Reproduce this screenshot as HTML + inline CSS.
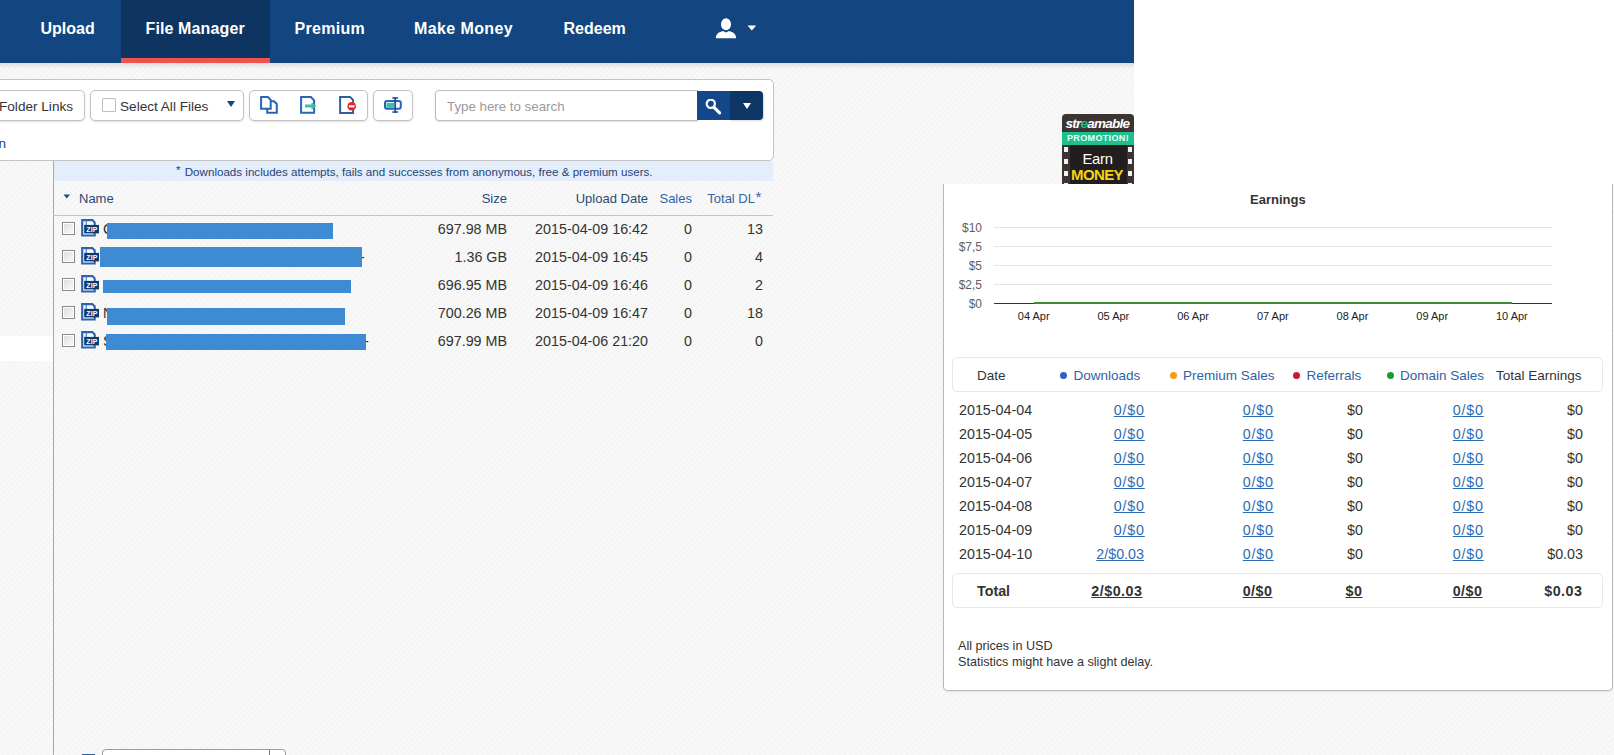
<!DOCTYPE html>
<html><head><meta charset="utf-8">
<style>
*{margin:0;padding:0;box-sizing:border-box}
html,body{width:1614px;height:755px;overflow:hidden}
body{position:relative;font-family:"Liberation Sans",sans-serif;color:#333;
background-color:#f5f5f5;
background-image:repeating-linear-gradient(135deg,rgba(255,255,255,0.45) 0px,rgba(255,255,255,0.45) 1.2px,rgba(255,255,255,0) 2px,rgba(255,255,255,0) 4px);
}
.a{position:absolute}
.t{position:absolute;white-space:nowrap;line-height:1}
#white-tr{left:1134px;top:0;width:480px;height:184px;background:#fff}
#nav{left:0;top:0;width:1134px;height:63px;background:#134680}
#navshadow{left:0;top:63px;width:1134px;height:6px;background:linear-gradient(rgba(0,0,0,0.10),rgba(0,0,0,0))}
#active{left:121px;top:0;width:149px;height:63px;background:#0e3562}
#redbar{left:121px;top:58px;width:149px;height:5px;background:#ef5350}
.nv{color:#fff;font-weight:bold;font-size:16px}

#card{left:-10px;top:79px;width:784px;height:82px;background:#fff;border:1px solid #c4c4c4;border-radius:0 5px 5px 0}
.btn{position:absolute;top:90px;height:31px;background:#fff;border:1px solid #c2c2c2;border-radius:5px;box-shadow:0 1px 2px rgba(0,0,0,0.12)}
.bt{font-size:13px;color:#333}
#search{left:435px;top:90px;width:263px;height:31px;background:#fff;border:1px solid #bdbdbd;border-radius:4px 0 0 4px;box-shadow:0 1px 2px rgba(0,0,0,0.12)}
#sbtn{left:697px;top:91px;width:33px;height:29px;background:#12488a}
#sdd{left:730px;top:91px;width:33px;height:29px;background:#0d3565;border-radius:0 4px 4px 0;box-shadow:1px 1px 2px rgba(0,0,0,0.15)}
#info{left:53px;top:161px;width:720px;height:20px;background:#e4eefa}
#tline{left:53px;top:161px;width:1px;height:594px;background:#a9a9a9}
#hline{left:53px;top:215px;width:720px;height:1px;background:#c4c4c4}
#lsel{left:0;top:336px;width:53px;height:25px;background:#fff}
.hd{font-size:13px;color:#2c5b90}
.cell{font-size:14.3px;color:#333}

.cb{position:absolute;width:13px;height:13px;border:1px solid #8a8a8a;background:linear-gradient(135deg,#dcdcdc,#fbfbfb);box-shadow:inset 0 0 0 1px #fff}
.bar{position:absolute;background:#3e8bd3}

#panel{left:943px;top:184px;width:670px;height:507px;background:#fff;border-left:1px solid #b9b9b9;border-right:1px solid #b9b9b9;border-bottom:1px solid #b9b9b9;border-radius:0 0 5px 5px;box-shadow:0 1px 2px rgba(0,0,0,0.08)}
.gl{position:absolute;left:994px;width:558px;height:1px;background:#e3e3e3}
.yl{position:absolute;right:632px;margin-top:0.5px;font-size:12px;color:#606060;line-height:1;white-space:nowrap}
.xl{position:absolute;font-size:11px;color:#222;line-height:1;white-space:nowrap;width:60px;text-align:center}
.hbox{position:absolute;left:952px;width:651px;background:#fff;border:1px solid #e2e8f0;border-radius:5px}
.ph{position:absolute;font-size:13.5px;line-height:1;white-space:nowrap;color:#333}
.pl{color:#2d63a8}
.dot{position:absolute;width:7px;height:7px;border-radius:50%}
.pr{position:absolute;font-size:14.3px;line-height:1;white-space:nowrap;color:#333}
.lk{letter-spacing:0.8px;margin-right:-0.8px;color:#2d6bb5;text-decoration:underline;text-underline-offset:0.5px;text-decoration-skip-ink:none}
.tb{letter-spacing:0.5px;margin-right:-0.5px;font-weight:bold;text-decoration:underline;text-underline-offset:1px;text-decoration-skip-ink:none;color:#333}
</style></head><body>
<div class="a" id="white-tr"></div>
<div class="a" id="nav"></div>
<div class="a" id="navshadow"></div>
<div class="a" id="active"></div>
<div class="a" id="redbar"></div>
<div class="t nv" style="left:40.5px;top:21px">Upload</div>
<div class="t nv" style="left:145.5px;top:21px;letter-spacing:0.12px">File Manager</div>
<div class="t nv" style="left:294.5px;top:21px;letter-spacing:0.3px">Premium</div>
<div class="t nv" style="left:414px;top:21px;letter-spacing:0.4px">Make Money</div>
<div class="t nv" style="left:563.5px;top:21px">Redeem</div>


<div class="a" id="card"></div>
<div class="btn" style="left:-10px;width:95px"></div>
<div class="t bt" style="left:-1px;top:99.5px;font-size:13.6px">Folder Links</div>
<div class="btn" style="left:90px;width:154px"></div>
<div class="a" style="left:102px;top:98px;width:14px;height:14px;border:1px solid #bdbdbd;background:#fff;border-radius:1px"></div>
<div class="t bt" style="left:120px;top:99.5px;font-size:13.6px">Select All Files</div>
<div class="a" style="left:227px;top:101px;width:0;height:0;border-left:4.5px solid transparent;border-right:4.5px solid transparent;border-top:6px solid #134680"></div>
<div class="btn" style="left:249px;width:119px"></div>
<div class="btn" style="left:373px;width:40px"></div>
<div class="t bt" style="left:-9px;top:137px;color:#24466f;font-size:13.6px">on</div>
<div class="a" id="search"></div>
<div class="t" style="left:447px;top:99.5px;font-size:13.3px;color:#9a9a9a">Type here to search</div>
<div class="a" id="sbtn"></div>
<div class="a" id="sdd"></div>
<div class="a" style="left:743px;top:103px;width:0;height:0;border-left:4.5px solid transparent;border-right:4.5px solid transparent;border-top:6px solid #fff"></div>
<svg class="a" style="left:704px;top:99px" width="19" height="17" viewBox="0 0 19 17"><circle cx="6.8" cy="4.8" r="4.1" fill="none" stroke="#fff" stroke-width="2.2"/><path d="M10 8.3 L15.6 13.8" stroke="#fff" stroke-width="3.2" stroke-linecap="round"/></svg>
<div class="a" id="info"></div>
<div class="t" style="left:176px;top:165.5px;font-size:11.6px;color:#1e4577"><span style="position:relative;top:-2px;margin-right:1px">*</span> Downloads includes attempts, fails and successes from anonymous, free &amp; premium users.</div>
<div class="a" id="tline"></div>
<div class="a" id="hline"></div>
<div class="a" id="lsel"></div>

<svg class="a" style="left:63px;top:194px" width="8" height="5" viewBox="0 0 8 5"><path d="M0.5 0.5 H7 L3.75 4.5 Z" fill="#1f4a7a"/></svg>
<div class="t hd" style="left:79px;top:192px;color:#2a4a78">Name</div>
<div class="t hd" style="right:1107px;top:192px;color:#2a4a78">Size</div>
<div class="t hd" style="right:966px;top:192px;color:#2f4a6a">Upload Date</div>
<div class="t hd" style="right:922px;top:192px;color:#2f63a8">Sales</div>
<div class="t hd" style="right:859px;top:192px;color:#3a62a0">Total DL</div>
<div class="t hd" style="left:755.5px;top:189px;font-size:15px;color:#3a62a0">*</div>
<div class="cb" style="left:62px;top:222px"></div>
<svg class="a" style="left:80px;top:219px" width="20" height="19" viewBox="0 0 20 19"><path d="M2.2 1.1 H12.4 L14.7 3.4 V16.5 H2.2 Z" fill="#fff" stroke="#2c62b0" stroke-width="2.1"/><rect x="3.3" y="2.2" width="1" height="13.3" fill="#a9d3f3"/><rect x="5.7" y="2" width="1" height="4" fill="#2c62b0"/><rect x="4.2" y="5.9" width="14.8" height="8.5" fill="#0e3a70"/><text x="12" y="12.9" font-family="Liberation Sans" font-weight="bold" font-size="7" fill="#fff" text-anchor="middle" letter-spacing="0.2">ZIP</text></svg>
<div class="t cell" style="left:103px;top:222px">C</div>
<div class="bar" style="left:107px;top:223px;width:226px;height:16px"></div>
<div class="t cell" style="right:1107px;top:222px">697.98 MB</div>
<div class="t cell" style="right:966px;top:222px">2015-04-09 16:42</div>
<div class="t cell" style="right:922px;top:222px">0</div>
<div class="t cell" style="right:851px;top:222px">13</div>
<div class="cb" style="left:62px;top:250px"></div>
<svg class="a" style="left:80px;top:247px" width="20" height="19" viewBox="0 0 20 19"><path d="M2.2 1.1 H12.4 L14.7 3.4 V16.5 H2.2 Z" fill="#fff" stroke="#2c62b0" stroke-width="2.1"/><rect x="3.3" y="2.2" width="1" height="13.3" fill="#a9d3f3"/><rect x="5.7" y="2" width="1" height="4" fill="#2c62b0"/><rect x="4.2" y="5.9" width="14.8" height="8.5" fill="#0e3a70"/><text x="12" y="12.9" font-family="Liberation Sans" font-weight="bold" font-size="7" fill="#fff" text-anchor="middle" letter-spacing="0.2">ZIP</text></svg>
<div class="t cell" style="left:103px;top:250px"></div>
<div class="t cell" style="left:360px;top:250px">-</div>
<div class="bar" style="left:100px;top:247px;width:262px;height:20px"></div>
<div class="t cell" style="right:1107px;top:250px">1.36 GB</div>
<div class="t cell" style="right:966px;top:250px">2015-04-09 16:45</div>
<div class="t cell" style="right:922px;top:250px">0</div>
<div class="t cell" style="right:851px;top:250px">4</div>
<div class="cb" style="left:62px;top:278px"></div>
<svg class="a" style="left:80px;top:275px" width="20" height="19" viewBox="0 0 20 19"><path d="M2.2 1.1 H12.4 L14.7 3.4 V16.5 H2.2 Z" fill="#fff" stroke="#2c62b0" stroke-width="2.1"/><rect x="3.3" y="2.2" width="1" height="13.3" fill="#a9d3f3"/><rect x="5.7" y="2" width="1" height="4" fill="#2c62b0"/><rect x="4.2" y="5.9" width="14.8" height="8.5" fill="#0e3a70"/><text x="12" y="12.9" font-family="Liberation Sans" font-weight="bold" font-size="7" fill="#fff" text-anchor="middle" letter-spacing="0.2">ZIP</text></svg>
<div class="t cell" style="left:103px;top:278px"></div>
<div class="bar" style="left:103px;top:280px;width:248px;height:13px"></div>
<div class="t cell" style="right:1107px;top:278px">696.95 MB</div>
<div class="t cell" style="right:966px;top:278px">2015-04-09 16:46</div>
<div class="t cell" style="right:922px;top:278px">0</div>
<div class="t cell" style="right:851px;top:278px">2</div>
<div class="cb" style="left:62px;top:306px"></div>
<svg class="a" style="left:80px;top:303px" width="20" height="19" viewBox="0 0 20 19"><path d="M2.2 1.1 H12.4 L14.7 3.4 V16.5 H2.2 Z" fill="#fff" stroke="#2c62b0" stroke-width="2.1"/><rect x="3.3" y="2.2" width="1" height="13.3" fill="#a9d3f3"/><rect x="5.7" y="2" width="1" height="4" fill="#2c62b0"/><rect x="4.2" y="5.9" width="14.8" height="8.5" fill="#0e3a70"/><text x="12" y="12.9" font-family="Liberation Sans" font-weight="bold" font-size="7" fill="#fff" text-anchor="middle" letter-spacing="0.2">ZIP</text></svg>
<div class="t cell" style="left:103px;top:306px">N</div>
<div class="bar" style="left:107px;top:308px;width:238px;height:17px"></div>
<div class="t cell" style="right:1107px;top:306px">700.26 MB</div>
<div class="t cell" style="right:966px;top:306px">2015-04-09 16:47</div>
<div class="t cell" style="right:922px;top:306px">0</div>
<div class="t cell" style="right:851px;top:306px">18</div>
<div class="cb" style="left:62px;top:334px"></div>
<svg class="a" style="left:80px;top:331px" width="20" height="19" viewBox="0 0 20 19"><path d="M2.2 1.1 H12.4 L14.7 3.4 V16.5 H2.2 Z" fill="#fff" stroke="#2c62b0" stroke-width="2.1"/><rect x="3.3" y="2.2" width="1" height="13.3" fill="#a9d3f3"/><rect x="5.7" y="2" width="1" height="4" fill="#2c62b0"/><rect x="4.2" y="5.9" width="14.8" height="8.5" fill="#0e3a70"/><text x="12" y="12.9" font-family="Liberation Sans" font-weight="bold" font-size="7" fill="#fff" text-anchor="middle" letter-spacing="0.2">ZIP</text></svg>
<div class="t cell" style="left:103px;top:334px">S</div>
<div class="t cell" style="left:364px;top:334px">-</div>
<div class="bar" style="left:106px;top:334px;width:260px;height:16px"></div>
<div class="t cell" style="right:1107px;top:334px">697.99 MB</div>
<div class="t cell" style="right:966px;top:334px">2015-04-06 21:20</div>
<div class="t cell" style="right:922px;top:334px">0</div>
<div class="t cell" style="right:851px;top:334px">0</div>

<div class="a" id="panel"></div>
<div class="t" style="left:1250px;top:192.5px;font-size:13px;font-weight:bold;color:#333">Earnings</div>
<div class="gl" style="top:227px"></div>
<div class="gl" style="top:246px"></div>
<div class="gl" style="top:265px"></div>
<div class="gl" style="top:284px"></div>
<div class="yl" style="top:221.0px">$10</div>
<div class="yl" style="top:240.0px">$7,5</div>
<div class="yl" style="top:259.0px">$5</div>
<div class="yl" style="top:278.0px">$2,5</div>
<div class="yl" style="top:297.0px">$0</div>
<div class="a" style="left:994px;top:303px;width:558px;height:1px;background:#333"></div>
<div class="a" style="left:1034px;top:301.5px;width:478px;height:2px;background:#3a8a3a"></div>
<div class="xl" style="left:1003.7px;top:311px">04 Apr</div>
<div class="xl" style="left:1083.4px;top:311px">05 Apr</div>
<div class="xl" style="left:1163.1px;top:311px">06 Apr</div>
<div class="xl" style="left:1242.8px;top:311px">07 Apr</div>
<div class="xl" style="left:1322.5px;top:311px">08 Apr</div>
<div class="xl" style="left:1402.2px;top:311px">09 Apr</div>
<div class="xl" style="left:1481.9px;top:311px">10 Apr</div>
<div class="hbox" style="top:357px;height:35px"></div>
<div class="ph" style="left:977px;top:368.5px">Date</div>
<div class="dot" style="left:1060.0px;top:371.5px;background:#2f62c8"></div>
<div class="ph pl" style="left:1073.5px;top:368.5px">Downloads</div>
<div class="dot" style="left:1169.5px;top:371.5px;background:#f39c1a"></div>
<div class="ph pl" style="left:1183.0px;top:368.5px">Premium Sales</div>
<div class="dot" style="left:1293.0px;top:371.5px;background:#d0162f"></div>
<div class="ph pl" style="left:1306.5px;top:368.5px">Referrals</div>
<div class="dot" style="left:1386.5px;top:371.5px;background:#1f9a30"></div>
<div class="ph pl" style="left:1400.0px;top:368.5px">Domain Sales</div>
<div class="ph" style="left:1496px;top:368.5px">Total Earnings</div>
<div class="pr" style="left:959px;top:403px">2015-04-04</div>
<div class="pr lk" style="right:470px;top:403px">0/$0</div>
<div class="pr lk" style="right:341px;top:403px">0/$0</div>
<div class="pr" style="right:251px;top:403px">$0</div>
<div class="pr lk" style="right:131px;top:403px">0/$0</div>
<div class="pr" style="right:31px;top:403px">$0</div>
<div class="pr" style="left:959px;top:427px">2015-04-05</div>
<div class="pr lk" style="right:470px;top:427px">0/$0</div>
<div class="pr lk" style="right:341px;top:427px">0/$0</div>
<div class="pr" style="right:251px;top:427px">$0</div>
<div class="pr lk" style="right:131px;top:427px">0/$0</div>
<div class="pr" style="right:31px;top:427px">$0</div>
<div class="pr" style="left:959px;top:451px">2015-04-06</div>
<div class="pr lk" style="right:470px;top:451px">0/$0</div>
<div class="pr lk" style="right:341px;top:451px">0/$0</div>
<div class="pr" style="right:251px;top:451px">$0</div>
<div class="pr lk" style="right:131px;top:451px">0/$0</div>
<div class="pr" style="right:31px;top:451px">$0</div>
<div class="pr" style="left:959px;top:475px">2015-04-07</div>
<div class="pr lk" style="right:470px;top:475px">0/$0</div>
<div class="pr lk" style="right:341px;top:475px">0/$0</div>
<div class="pr" style="right:251px;top:475px">$0</div>
<div class="pr lk" style="right:131px;top:475px">0/$0</div>
<div class="pr" style="right:31px;top:475px">$0</div>
<div class="pr" style="left:959px;top:499px">2015-04-08</div>
<div class="pr lk" style="right:470px;top:499px">0/$0</div>
<div class="pr lk" style="right:341px;top:499px">0/$0</div>
<div class="pr" style="right:251px;top:499px">$0</div>
<div class="pr lk" style="right:131px;top:499px">0/$0</div>
<div class="pr" style="right:31px;top:499px">$0</div>
<div class="pr" style="left:959px;top:523px">2015-04-09</div>
<div class="pr lk" style="right:470px;top:523px">0/$0</div>
<div class="pr lk" style="right:341px;top:523px">0/$0</div>
<div class="pr" style="right:251px;top:523px">$0</div>
<div class="pr lk" style="right:131px;top:523px">0/$0</div>
<div class="pr" style="right:31px;top:523px">$0</div>
<div class="pr" style="left:959px;top:547px">2015-04-10</div>
<div class="pr lk" style="right:470px;top:547px;letter-spacing:0;margin-right:0">2/$0.03</div>
<div class="pr lk" style="right:341px;top:547px">0/$0</div>
<div class="pr" style="right:251px;top:547px">$0</div>
<div class="pr lk" style="right:131px;top:547px">0/$0</div>
<div class="pr" style="right:31px;top:547px">$0.03</div>
<div class="hbox" style="top:573px;height:35px"></div>
<div class="pr" style="left:977px;top:583.5px;font-weight:bold">Total</div>
<div class="pr tb" style="right:472px;top:583.5px">2/$0.03</div>
<div class="pr tb" style="right:342px;top:583.5px">0/$0</div>
<div class="pr tb" style="right:252px;top:583.5px">$0</div>
<div class="pr tb" style="right:132px;top:583.5px">0/$0</div>
<div class="pr tb" style="right:32px;top:583.5px;text-decoration:none">$0.03</div>
<div class="t" style="left:958px;top:640px;font-size:12.6px;color:#333">All prices in USD</div>
<div class="t" style="left:958px;top:655.5px;font-size:12.6px;color:#333">Statistics might have a slight delay.</div>

<svg class="a" style="left:715px;top:18px" width="22" height="21" viewBox="0 0 22 21"><ellipse cx="11" cy="6.3" rx="5" ry="6" fill="#fff"/><path d="M0.8 20.3 C1 15.5 4 14 8 13 L11 14.5 L14 13 C18 14 21 15.5 21.2 20.3 Z" fill="#fff"/></svg>
<svg class="a" style="left:747px;top:24.5px" width="10" height="6" viewBox="0 0 10 6"><path d="M0.5 0.5 H9.2 L4.85 5.5 Z" fill="#fff"/></svg>
<!-- toolbar icons -->
<svg class="a" style="left:258px;top:94px" width="22" height="22" viewBox="0 0 22 22">
<path d="M9.2 7.2 H16 L18.8 10 V18.7 H9.2 Z" fill="#fff" stroke="#2b63b5" stroke-width="2"/>
<path d="M3.1 3.1 H9.9 L12.7 5.9 V14.8 H3.1 Z" fill="#fff" stroke="#2b63b5" stroke-width="2"/>
</svg>
<svg class="a" style="left:298px;top:94px" width="22" height="22" viewBox="0 0 22 22">
<path d="M3.1 3.1 H12.9 L16.1 6.3 V18.7 H3.1 Z" fill="#fff" stroke="#2b63b5" stroke-width="2"/>
<path d="M7 10.5 H13.5 V8.2 L18.6 12 L13.5 15.8 V13.5 H7 Z" fill="#3cc1a0"/>
</svg>
<svg class="a" style="left:337px;top:94px" width="22" height="22" viewBox="0 0 22 22">
<path d="M3.1 2.9 H13 L16.1 6 V18.9 H3.1 Z" fill="#fff" stroke="#2f5f9c" stroke-width="2"/>
<circle cx="14.7" cy="12.3" r="4.3" fill="#e8262c"/>
<rect x="11.9" y="11.3" width="5.6" height="2" fill="#fff"/>
</svg>
<svg class="a" style="left:382px;top:95px" width="22" height="20" viewBox="0 0 22 20">
<rect x="3" y="6" width="15.8" height="7.8" rx="2" fill="#fff" stroke="#2b63b5" stroke-width="2"/>
<rect x="4.5" y="7.8" width="7.5" height="5" fill="#3cc1a0"/>
<rect x="12.3" y="2.2" width="1.8" height="15.6" fill="#1f4f99"/>
<rect x="10.3" y="2.2" width="5.8" height="1.5" fill="#1f4f99"/>
<rect x="10.3" y="16.3" width="5.8" height="1.5" fill="#1f4f99"/>
</svg>

<!-- ad -->
<div class="a" style="left:1062px;top:114px;width:72px;height:70px;background:#3b3432;border-radius:4px 4px 0 0;overflow:hidden">
 <div class="a" style="left:0;top:17.5px;width:72px;height:13.5px;background:#1fbf90"></div>
 <div class="a" style="left:8px;top:31px;width:57px;height:39px;background:#221e1d"></div>
 <div class="a" style="left:2px;top:33px;width:4px;height:4.5px;background:#f4f0ee"></div>
 <div class="a" style="left:2px;top:45px;width:4px;height:4.5px;background:#f4f0ee"></div>
 <div class="a" style="left:2px;top:57px;width:4px;height:4.5px;background:#f4f0ee"></div>
 <div class="a" style="left:2px;top:69px;width:4px;height:4.5px;background:#f4f0ee"></div>
 <div class="a" style="left:66px;top:33px;width:4px;height:4.5px;background:#f4f0ee"></div>
 <div class="a" style="left:66px;top:45px;width:4px;height:4.5px;background:#f4f0ee"></div>
 <div class="a" style="left:66px;top:57px;width:4px;height:4.5px;background:#f4f0ee"></div>
 <div class="a" style="left:66px;top:69px;width:4px;height:4.5px;background:#f4f0ee"></div>
 <div class="t" style="left:3.5px;top:2.5px;font-size:13.5px;font-weight:bold;font-style:italic;color:#fff;letter-spacing:-0.75px">str<span style="color:#1fbf90">e</span>amable</div>
 <div class="t" style="left:5px;top:20px;font-size:9px;font-weight:bold;color:#eafff8;letter-spacing:0.35px">PROMOTION!</div>
 <div class="t" style="left:20.5px;top:37.5px;font-size:14.8px;color:#fff;letter-spacing:-0.3px">Earn</div>
 <div class="t" style="left:9px;top:52.5px;font-size:15px;font-weight:bold;color:#f4d312;letter-spacing:-0.6px">MONEY</div>
</div>
<!-- bottom controls -->
<div class="a" style="left:82px;top:754px;width:13px;height:4px;background:#2c5d9c"></div>
<div class="a" style="left:102px;top:749px;width:184px;height:12px;background:#fff;border:1px solid #9a9a9a;border-radius:4px"></div>
<div class="a" style="left:269px;top:750px;width:1px;height:8px;background:#777"></div>
</body></html>
